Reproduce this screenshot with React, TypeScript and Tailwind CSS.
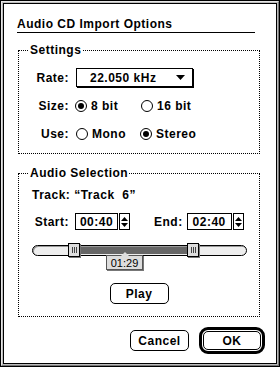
const FONT = { fontFamily: '"Liberation Sans", Arial, sans-serif' };

function Radio({ checked, label, width }: { checked?: boolean; label: string; width: string }) {
	return (
		<div className={`flex items-center gap-[4px] ${width}`}>
			<span className="w-[12px] h-[12px] rounded-full border border-black flex items-center justify-center bg-white">
				{checked && <span className="w-[6px] h-[6px] rounded-full bg-black" />}
			</span>
			<span>{label}</span>
		</div>
	);
}

function Stepper() {
	return (
		<div className="w-[11px] h-[17px] border border-black bg-white flex flex-col items-center justify-center gap-[2px]">
			<svg width="7" height="4" viewBox="0 0 7 4"><polygon points="3.5,0 7,4 0,4" fill="#000" /></svg>
			<svg width="7" height="4" viewBox="0 0 7 4"><polygon points="0,0 7,0 3.5,4" fill="#000" /></svg>
		</div>
	);
}

function Thumb({ left }: { left: string }) {
	return (
		<div className={`absolute top-[-3px] ${left} w-[12px] h-[14px] border border-black bg-[#dddddd] shadow-[1px_1px_0_#777] flex items-center justify-center gap-[1px]`}>
			<span className="w-[1px] h-[6px] bg-[#444]" />
			<span className="w-[1px] h-[6px] bg-[#444]" />
			<span className="w-[1px] h-[6px] bg-[#444]" />
		</div>
	);
}

function MacButton({ children, className = "" }: { children: React.ReactNode; className?: string }) {
	return (
		<div className={`border border-black rounded-[5px] bg-white flex items-center justify-center ${className}`}>
			{children}
		</div>
	);
}

export default function App() {
	return (
		<div className="w-[280px] h-[367px] border border-black bg-[#bbbbbb] text-black text-[12px] font-bold tracking-[0.5px] leading-4" style={FONT}>
			<div className="w-full h-full border border-t-[#e6e6e6] border-l-[#e6e6e6] border-b-[#777777] border-r-[#777777] p-[1px]">
				<div className="w-full h-full border border-black bg-white flex flex-col pt-[12px]">
					{/* Title */}
					<div className="ml-[13px] w-[238px] h-[17px] border-b border-black">Audio CD Import Options</div>

					{/* Settings */}
					<fieldset className="mt-[9px] ml-[14px] w-[242px] border border-dotted border-black p-0 pb-[11px]">
						<legend className="ml-[10px] px-[1px] leading-4">Settings</legend>
						<div className="mt-[10px] flex items-center h-[19px]">
							<span className="w-[50px] text-right">Rate:</span>
							<div className="ml-[7px] w-[117px] h-[19px] border border-black shadow-[1px_1px_0_#000] flex items-center pl-[13px] pr-[7px] justify-between">
								<span>22.050 kHz</span>
								<svg width="9" height="5" viewBox="0 0 9 5"><polygon points="0,0 9,0 4.5,5" fill="#000" /></svg>
							</div>
						</div>
						<div className="mt-[11px] flex items-center h-[16px]">
							<span className="w-[50px] text-right">Size:</span>
							<div className="ml-[6px] flex items-center">
								<Radio checked label="8 bit" width="w-[66px]" />
								<Radio label="16 bit" width="w-[60px]" />
							</div>
						</div>
						<div className="mt-[12px] flex items-center h-[16px]">
							<span className="w-[50px] text-right">Use:</span>
							<div className="ml-[7px] flex items-center">
								<Radio label="Mono" width="w-[64px]" />
								<Radio checked label="Stereo" width="w-[64px]" />
							</div>
						</div>
					</fieldset>

					{/* Audio Selection */}
					<fieldset className="mt-[11px] ml-[14px] w-[242px] border border-dotted border-black p-0 pb-[12px]">
						<legend className="ml-[10px] px-[1px] leading-4">Audio Selection</legend>
						<div className="mt-[6px] pl-[13px] h-[16px] whitespace-pre">Track: “Track  6”</div>
						<div className="mt-[10px] flex items-center h-[17px]">
							<span className="w-[50px] text-right">Start:</span>
							<div className="ml-[6px] w-[43px] h-[17px] border border-black flex items-center justify-center">00:40</div>
							<div className="ml-[1px]"><Stepper /></div>
							<span className="ml-[24px]">End:</span>
							<div className="ml-[4px] w-[45px] h-[17px] border border-black flex items-center justify-center">02:40</div>
							<div className="ml-[1px]"><Stepper /></div>
						</div>
						{/* Slider */}
						<div className="relative mt-[15px] ml-[13px] w-[215px] h-[11px] rounded-full border border-black bg-[#eeeeee] shadow-[inset_1px_1px_0_#999]">
							<div className="absolute top-[1px] left-[47px] w-[108px] h-[7px] bg-[#666666]" />
							<Thumb left="left-[35px]" />
							<Thumb left="left-[154px]" />
							<div className="absolute top-[9px] left-[73px] w-[37px] h-[15px] border border-[#555] bg-[#dddddd] shadow-[1px_1px_0_#777] flex items-center justify-center text-[11px] font-normal tracking-normal">
								<span className="absolute -top-[4px] left-[14px] w-0 h-0 border-l-[4px] border-r-[4px] border-b-[4px] border-l-transparent border-r-transparent border-b-[#dddddd]" />
								01:29
							</div>
						</div>
						<div className="mt-[27px] flex justify-center">
							<MacButton className="w-[59px] h-[21px]">Play</MacButton>
						</div>
					</fieldset>

					{/* Buttons */}
					<div className="mt-[10px] pr-[11px] flex items-center justify-end gap-[10px]">
						<MacButton className="w-[59px] h-[21px]">Cancel</MacButton>
						<div className="w-[66px] h-[27px] border-[3px] border-black rounded-[9px] p-[1px]">
							<MacButton className="w-full h-full">OK</MacButton>
						</div>
					</div>
				</div>
			</div>
		</div>
	);
}
